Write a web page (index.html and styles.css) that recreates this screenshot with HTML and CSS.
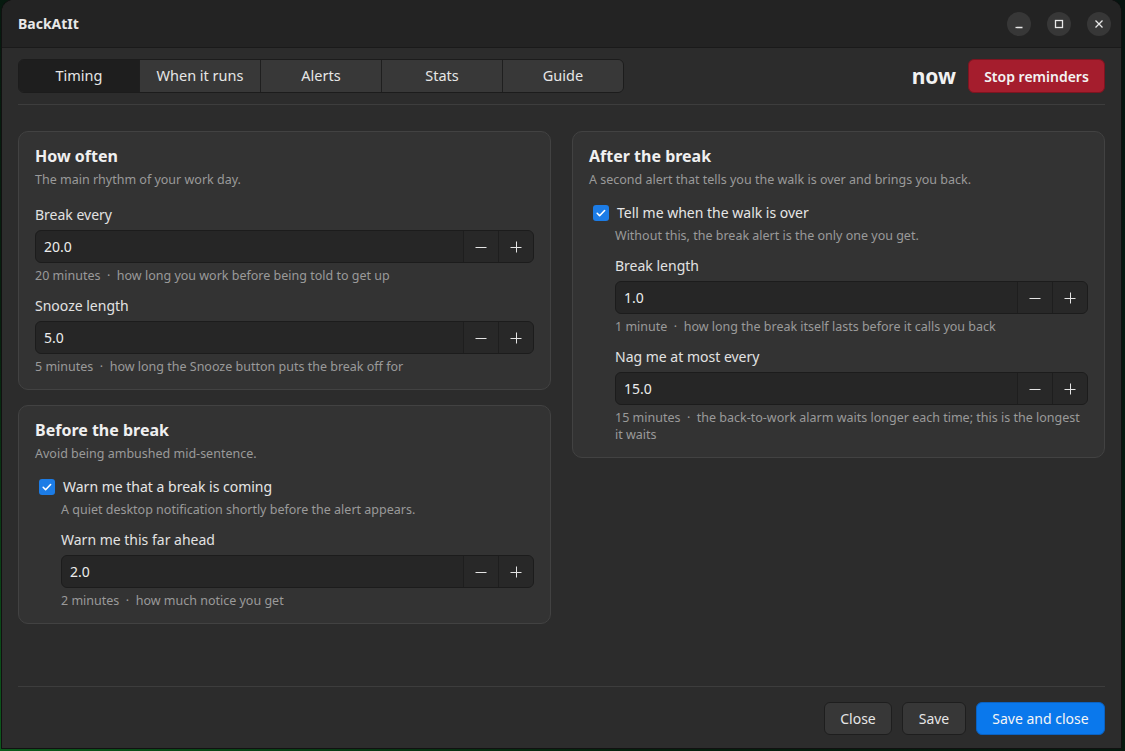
FILE: index.html
```html
<!DOCTYPE html>
<html>

<head>
    <title>BackAtIt</title>
    <link rel="stylesheet" href="styles.css">
</head>

<body>
    <div class="window">
        <div class="header-bar">
            <span class="app-title">BackAtIt</span>
            <div class="window-controls">
                <button class="wc-button" title="Minimise">
                    <svg width="12" height="12" viewBox="0 0 12 12"><path d="M2.5 9.5h7" stroke="#e8e8e8" stroke-width="1.3" fill="none"/></svg>
                </button>
                <button class="wc-button" title="Maximise">
                    <svg width="12" height="12" viewBox="0 0 12 12"><rect x="2.5" y="2.5" width="7" height="7" stroke="#e8e8e8" stroke-width="1.3" fill="none"/></svg>
                </button>
                <button class="wc-button" title="Close">
                    <svg width="12" height="12" viewBox="0 0 12 12"><path d="M2.5 2.5l7 7M9.5 2.5l-7 7" stroke="#e8e8e8" stroke-width="1.3" fill="none"/></svg>
                </button>
            </div>
        </div>

        <div class="content">
            <div class="toolbar">
                <div class="tabs">
                    <button class="tab active">Timing</button>
                    <button class="tab">When it runs</button>
                    <button class="tab">Alerts</button>
                    <button class="tab">Stats</button>
                    <button class="tab">Guide</button>
                </div>
                <div class="status">
                    <span class="countdown">now</span>
                    <button class="stop-button">Stop reminders</button>
                </div>
            </div>

            <div class="columns">
                <div class="column">
                    <div class="card">
                        <h2>How often</h2>
                        <p class="card-sub">The main rhythm of your work day.</p>

                        <div class="field">
                            <label>Break every</label>
                            <div class="spin">
                                <span class="spin-value">20.0</span>
                                <button class="spin-btn"><svg width="12" height="12" viewBox="0 0 12 12"><path d="M0.5 6.5h11" stroke="#e4e4e4" stroke-width="1"/></svg></button>
                                <button class="spin-btn"><svg width="12" height="12" viewBox="0 0 12 12"><path d="M0.5 6.5h11M6.5 0.5v11" stroke="#e4e4e4" stroke-width="1"/></svg></button>
                            </div>
                            <p class="hint">20 minutes &nbsp;&middot;&nbsp; how long you work before being told to get up</p>
                        </div>

                        <div class="field">
                            <label>Snooze length</label>
                            <div class="spin">
                                <span class="spin-value">5.0</span>
                                <button class="spin-btn"><svg width="12" height="12" viewBox="0 0 12 12"><path d="M0.5 6.5h11" stroke="#e4e4e4" stroke-width="1"/></svg></button>
                                <button class="spin-btn"><svg width="12" height="12" viewBox="0 0 12 12"><path d="M0.5 6.5h11M6.5 0.5v11" stroke="#e4e4e4" stroke-width="1"/></svg></button>
                            </div>
                            <p class="hint">5 minutes &nbsp;&middot;&nbsp; how long the Snooze button puts the break off for</p>
                        </div>
                    </div>

                    <div class="card">
                        <h2>Before the break</h2>
                        <p class="card-sub">Avoid being ambushed mid-sentence.</p>

                        <div class="check-row">
                            <span class="checkbox"><svg width="16" height="16" viewBox="0 0 16 16"><path d="M4.2 8.3l2.4 2.4 5-5.2" stroke="#fff" stroke-width="1.6" fill="none" stroke-linecap="round" stroke-linejoin="round"/></svg></span>
                            <span class="check-label">Warn me that a break is coming</span>
                        </div>
                        <div class="nested">
                            <p class="check-desc">A quiet desktop notification shortly before the alert appears.</p>
                            <div class="field">
                                <label>Warn me this far ahead</label>
                                <div class="spin">
                                    <span class="spin-value">2.0</span>
                                    <button class="spin-btn"><svg width="12" height="12" viewBox="0 0 12 12"><path d="M0.5 6.5h11" stroke="#e4e4e4" stroke-width="1"/></svg></button>
                                    <button class="spin-btn"><svg width="12" height="12" viewBox="0 0 12 12"><path d="M0.5 6.5h11M6.5 0.5v11" stroke="#e4e4e4" stroke-width="1"/></svg></button>
                                </div>
                                <p class="hint">2 minutes &nbsp;&middot;&nbsp; how much notice you get</p>
                            </div>
                        </div>
                    </div>
                </div>

                <div class="column">
                    <div class="card">
                        <h2>After the break</h2>
                        <p class="card-sub">A second alert that tells you the walk is over and brings you back.</p>

                        <div class="check-row">
                            <span class="checkbox"><svg width="16" height="16" viewBox="0 0 16 16"><path d="M4.2 8.3l2.4 2.4 5-5.2" stroke="#fff" stroke-width="1.6" fill="none" stroke-linecap="round" stroke-linejoin="round"/></svg></span>
                            <span class="check-label">Tell me when the walk is over</span>
                        </div>
                        <div class="nested">
                            <p class="check-desc">Without this, the break alert is the only one you get.</p>
                            <div class="field">
                                <label>Break length</label>
                                <div class="spin">
                                    <span class="spin-value">1.0</span>
                                    <button class="spin-btn"><svg width="12" height="12" viewBox="0 0 12 12"><path d="M0.5 6.5h11" stroke="#e4e4e4" stroke-width="1"/></svg></button>
                                    <button class="spin-btn"><svg width="12" height="12" viewBox="0 0 12 12"><path d="M0.5 6.5h11M6.5 0.5v11" stroke="#e4e4e4" stroke-width="1"/></svg></button>
                                </div>
                                <p class="hint">1 minute &nbsp;&middot;&nbsp; how long the break itself lasts before it calls you back</p>
                            </div>
                            <div class="field">
                                <label>Nag me at most every</label>
                                <div class="spin">
                                    <span class="spin-value">15.0</span>
                                    <button class="spin-btn"><svg width="12" height="12" viewBox="0 0 12 12"><path d="M0.5 6.5h11" stroke="#e4e4e4" stroke-width="1"/></svg></button>
                                    <button class="spin-btn"><svg width="12" height="12" viewBox="0 0 12 12"><path d="M0.5 6.5h11M6.5 0.5v11" stroke="#e4e4e4" stroke-width="1"/></svg></button>
                                </div>
                                <p class="hint">15 minutes &nbsp;&middot;&nbsp; the back-to-work alarm waits longer each time; this is the longest it waits</p>
                            </div>
                        </div>
                    </div>
                </div>
            </div>

            <div class="footer">
                <button class="btn btn-close">Close</button>
                <button class="btn btn-save">Save</button>
                <button class="btn btn-primary">Save and close</button>
            </div>
        </div>
    </div>
</body>

</html>
```

FILE: styles.css
```css
/* Dark GTK-style settings window */
html {
    background: radial-gradient(ellipse at 0% 100%, #0c5a1c 0%, #06200e 40%, #071410 100%);
}

body {
    margin: 0;
    padding: 0;
    font-family: "Noto Sans", "Open Sans", sans-serif;
    color: #e8e8e8;
    height: 751px;
    overflow: hidden;
}

button {
    font-family: inherit;
    color: inherit;
}

.window {
    margin-left: 2px;
    width: 1119px;
    height: 748px;
    background-color: #2c2c2c;
    border-radius: 12px 12px 0 0;
    display: flex;
    flex-direction: column;
    overflow: hidden;
    box-shadow: 0 0 0 1px #111;
}

.header-bar {
    height: 47px;
    flex-shrink: 0;
    background-color: #232323;
    border-bottom: 1px solid #1a1a1a;
    display: flex;
    align-items: center;
    justify-content: space-between;
    padding: 0 10px 0 16px;
}

.app-title {
    font-weight: bold;
    font-size: 14px;
}

.window-controls {
    display: flex;
    gap: 16px;
}

.wc-button {
    width: 24px;
    height: 24px;
    border-radius: 50%;
    border: none;
    background-color: #373737;
    padding: 0;
    display: flex;
    align-items: center;
    justify-content: center;
}

.content {
    flex: 1;
    display: flex;
    flex-direction: column;
    padding: 11px 16px 13px;
}

.toolbar {
    display: flex;
    justify-content: space-between;
    align-items: center;
    padding-bottom: 11px;
    border-bottom: 1px solid #3d3d3d;
}

.tabs {
    display: flex;
    border: 1px solid #1c1c1c;
    border-radius: 6px;
    overflow: hidden;
}

.tab {
    width: 121px;
    height: 32px;
    border: none;
    border-left: 1px solid #1f1f1f;
    background-color: #383838;
    font-size: 14.5px;
    color: #e6e6e6;
    padding: 0 0 3px;
}

.tab:first-child {
    border-left: none;
    width: 120px;
}

.tab.active {
    background-color: #1e1e1e;
}

.status {
    display: flex;
    align-items: center;
    gap: 12px;
}

.countdown {
    font-size: 21px;
    font-weight: bold;
    color: #f2f2f2;
}

.stop-button {
    height: 34px;
    width: 137px;
    border: 1px solid #7d1420;
    border-radius: 6px;
    background-color: #a51d2d;
    font-size: 14px;
    font-weight: 600;
    color: #f3f3f3;
}

.columns {
    flex: 1;
    display: flex;
    gap: 21px;
    align-items: flex-start;
    padding-top: 26px;
}

.column {
    flex: 1;
    display: flex;
    flex-direction: column;
    gap: 15px;
}

.card {
    background-color: #333333;
    border: 1px solid #424242;
    border-radius: 10px;
    padding: 13px 16px 14px;
}

.card h2 {
    margin: 0;
    font-size: 16px;
    font-weight: bold;
    color: #f0f0f0;
    line-height: 22px;
}

.card-sub {
    margin: 4px 0 0;
    font-size: 12.5px;
    color: #9a9a9a;
    line-height: 18px;
}

.field {
    margin-top: 16px;
}

.field + .field {
    margin-top: 12px;
}

.field label {
    display: block;
    font-size: 14px;
    line-height: 20px;
    color: #e2e2e2;
    margin-bottom: 5px;
}

.spin {
    display: flex;
    box-sizing: border-box;
    height: 33px;
    border: 1px solid #1c1c1c;
    border-radius: 6px;
    background-color: #262626;
    overflow: hidden;
}

.spin-value {
    flex: 1;
    display: flex;
    align-items: center;
    padding-left: 8px;
    font-size: 14px;
    color: #ececec;
}

.spin-btn {
    width: 35px;
    border: none;
    border-left: 1px solid #1e1e1e;
    background-color: #282828;
    padding: 0;
    display: flex;
    align-items: center;
    justify-content: center;
}

.hint {
    margin: 4px 0 0;
    font-size: 12.5px;
    line-height: 17px;
    color: #9a9a9a;
}

.check-row {
    display: flex;
    align-items: center;
    gap: 8px;
    margin-top: 14px;
    padding-left: 4px;
}

.checkbox {
    width: 16px;
    height: 16px;
    border-radius: 3px;
    background-color: #1c7ce6;
    display: flex;
}

.check-label {
    font-size: 14px;
    color: #e6e6e6;
}

.nested {
    padding-left: 26px;
}

.check-desc {
    margin: 5px 0 0;
    font-size: 12.5px;
    line-height: 17px;
    color: #9a9a9a;
}

.nested .field {
    margin-top: 12px;
}

.footer {
    display: flex;
    justify-content: flex-end;
    gap: 10px;
    border-top: 1px solid #3d3d3d;
    padding-top: 15px;
}

.btn {
    height: 33px;
    padding: 0;
    border: 1px solid #1e1e1e;
    border-radius: 6px;
    background-color: #373737;
    font-size: 14px;
    color: #e6e6e6;
}

.btn-close {
    width: 68px;
}

.btn-save {
    width: 64px;
}

.btn-primary {
    width: 129px;
    background-color: #0a78ec;
    border-color: #0a62c2;
    color: #f5f5f5;
}
```
